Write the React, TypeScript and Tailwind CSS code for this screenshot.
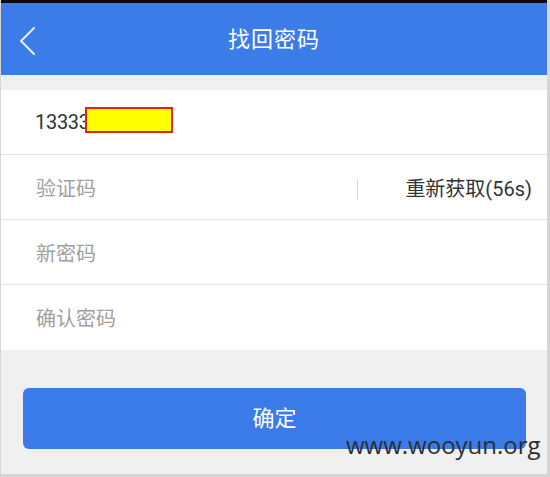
import React from 'react';

const font = { fontFamily: 'Roboto, "Noto Sans CJK SC", sans-serif' };

const App = () => {
  return (
    <div
      className="relative w-[550px] h-[477px] overflow-hidden bg-[#f0f0f0] border-l border-r-[3px] border-b-[3px] border-[#d6d6d6]"
      style={font}
    >
      <div className="h-[3px] bg-[#0a0a14]" />

      {/* Header */}
      <div className="relative h-[72px] bg-[#3b7ce9] flex items-center justify-center">
        <svg
          className="absolute left-[17px] top-[23px]"
          width="20"
          height="30"
          viewBox="0 0 20 30"
          fill="none"
        >
          <path d="M16 2 L3 15 L16 28" stroke="#e8f0ff" strokeWidth="2" strokeLinecap="round" strokeLinejoin="round" />
        </svg>
        <h1 className="text-white text-[22px] tracking-[1px]">找回密码</h1>
      </div>

      <div className="h-[15px]" />

      {/* Form rows */}
      <div className="bg-white">
        <div className="h-[65px] flex items-center pl-[34px] border-b border-[#e2e2e2]">
          <span className="text-[20px] text-[#333] tracking-[-0.3px]">13333</span>
          <div className="w-[88px] h-[26px] bg-[#ffff00] border-2 border-[#e0241b] -ml-[5px] mt-[-4px]" />
        </div>
        <div className="h-[65px] flex items-center pl-[35px] border-b border-[#e2e2e2]">
          <span className="flex-1 text-[20px] text-[#a0a0a0] mt-[3px]">验证码</span>
          <div className="w-px h-[22px] bg-[#dcdcdc] mr-[47px] mt-[3px]" />
          <span className="text-[20px] text-[#333] pr-[15px] mt-[3px]">重新获取(56s)</span>
        </div>
        <div className="h-[65px] flex items-center pl-[35px] border-b border-[#e2e2e2]">
          <span className="text-[20px] text-[#a0a0a0] mt-[3px]">新密码</span>
        </div>
        <div className="h-[65px] flex items-center pl-[35px]">
          <span className="text-[20px] text-[#a0a0a0] mt-[3px]">确认密码</span>
        </div>
      </div>

      {/* Submit */}
      <div className="px-[22px] pt-[38px]">
        <button className="w-[503px] h-[61px] rounded-[6px] bg-[#3a7be9] text-white text-[22px] flex items-center justify-center">
          确定
        </button>
      </div>

      {/* Watermark */}
      <span
        className="absolute left-[345px] top-[433px] text-[24px] text-[#2e2e2e] leading-none"
        style={{ fontFamily: '"Open Sans", sans-serif' }}
      >
        www.wooyun.org
      </span>
    </div>
  );
};

export default App;
